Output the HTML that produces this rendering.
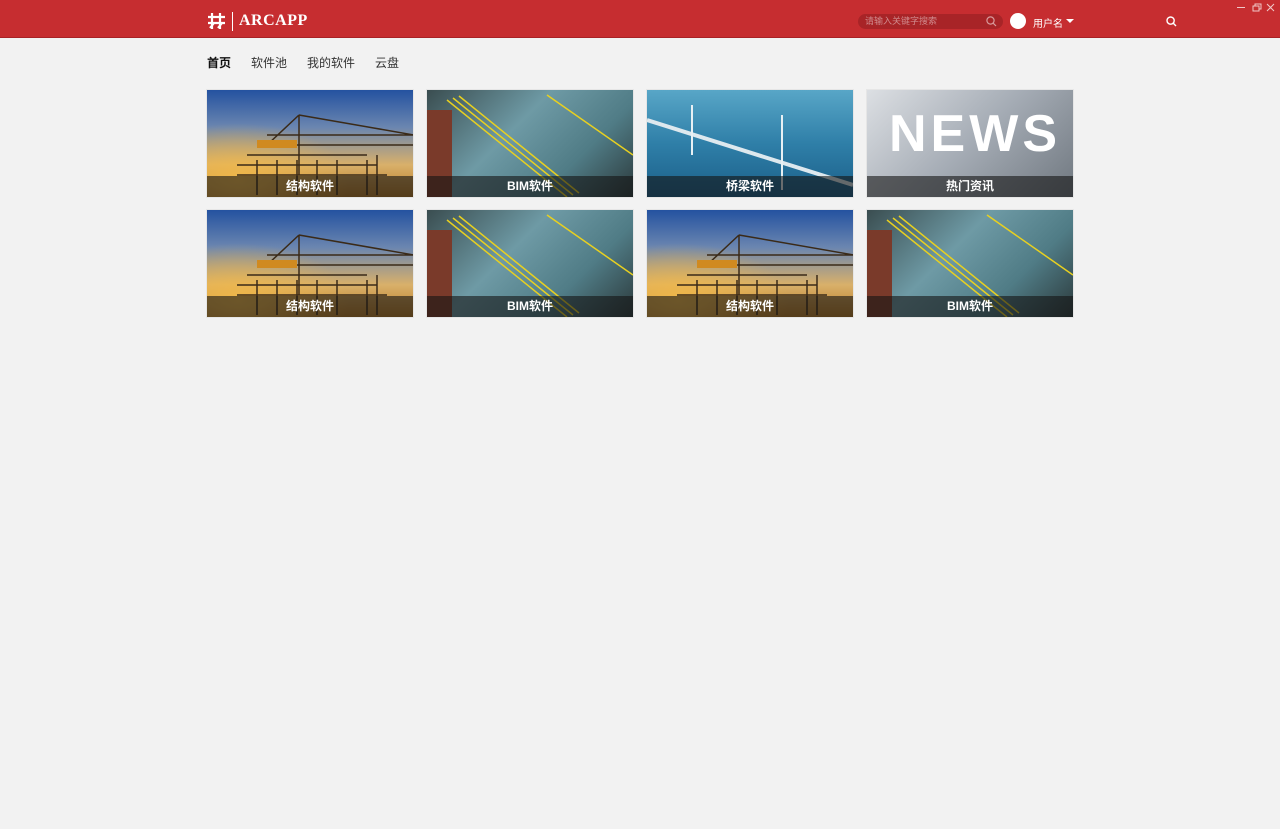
<!DOCTYPE html>
<html><head><meta charset="utf-8"><style>
*{margin:0;padding:0;box-sizing:border-box}
body{width:1280px;height:829px;background:#f2f2f2;font-family:"Liberation Sans","Noto Sans CJK SC",sans-serif;position:relative;overflow:hidden}
.hd{position:absolute;left:0;top:0;width:1280px;height:38px;background:#c62d30;border-bottom:1px solid #a82226}
.logo{position:absolute;left:207px;top:12px;color:#fff}
.sep{position:absolute;left:232px;top:12px;width:1px;height:19px;background:#fff}
.brand{position:absolute;left:239px;top:12px;color:#fff;font-family:"Liberation Serif",serif;font-weight:bold;font-size:16px;letter-spacing:0.5px}
.search{position:absolute;left:858px;top:14px;width:145px;height:15px;border-radius:8px;background:#a82427;color:#d08a8c;font-size:9px;line-height:15px;padding-left:7px}
.av{position:absolute;left:1010px;top:13px;width:16px;height:16px;border-radius:50%;background:#fff}
.user{position:absolute;left:1033px;top:15px;color:#fff;font-size:10px}
.caret{position:absolute;left:1066px;top:19px;border:4px solid transparent;border-top:4px solid #fff;border-bottom:0}
.nav{position:absolute;top:54px;font-size:12px;color:#333}
.card{position:absolute;width:206px;height:107px;overflow:hidden;box-shadow:0 0 0 1px #e6e6e6}
.cap{position:absolute;left:0;bottom:0;width:100%;height:21px;background:rgba(20,20,20,.6);color:#fff;font-weight:bold;font-size:12px;text-align:center;line-height:21px}
.crane{background:radial-gradient(ellipse at 15% 85%,#f0b84a 0%,rgba(240,184,74,0) 45%),linear-gradient(180deg,#2452a0 0%,#6b86b0 35%,#d9b06a 70%,#b77a25 100%)}
.bim{background:linear-gradient(135deg,#3a4d50 0%,#6e9aa5 40%,#507c86 70%,#2c3a3c 100%)}
.bridge{background:linear-gradient(180deg,#58a6c7 0%,#2f7fa8 50%,#1b5f89 100%)}
.news{background:linear-gradient(135deg,#dcdfe3 0%,#a5acb5 50%,#707880 100%)}
</style></head><body>
<div class="hd">
 <svg class="logo" width="19" height="18" viewBox="0 0 19 18" fill="none" stroke="#fff" stroke-width="2.2"><path d="M5 1v16M13 1v16M1 5h17M1 11h17M3 16l4-5M11 16l4-5"/></svg>
 <div class="sep"></div>
 <div class="brand">ARCAPP</div>
 <div class="search">请输入关键字搜索</div>
 <svg style="position:absolute;left:986px;top:16px" width="11" height="11" viewBox="0 0 11 11" fill="none" stroke="#d89a9b" stroke-width="1.2"><circle cx="4.5" cy="4.5" r="3.6"/><path d="M7.3 7.3L10 10"/></svg>
 <div class="av"></div>
 <div class="user">用户名</div>
 <div class="caret"></div>
 <svg style="position:absolute;left:1166px;top:16px" width="11" height="11" viewBox="0 0 11 11" fill="none" stroke="#fff" stroke-width="1.4"><circle cx="4.6" cy="4.6" r="3.6"/><path d="M7.3 7.3L10 10"/></svg>
 <svg style="position:absolute;left:1237px;top:3px" width="40" height="9" viewBox="0 0 40 9" fill="none" stroke="#f0c8c8" stroke-width="1"><path d="M0 4.5h8M16 3h6v5h-6zM18 3V1h6v5h-2M30 1l7 7M37 1l-7 7"/></svg>
</div>
<div class="nav" style="left:207px;font-weight:bold;color:#111">首页</div>
<div class="nav" style="left:251px">软件池</div>
<div class="nav" style="left:307px">我的软件</div>
<div class="nav" style="left:375px">云盘</div>

<div class="card crane" style="left:207px;top:90px"><svg width="206" height="107" style="position:absolute"><g stroke="#3a2a18" stroke-width="1.5" fill="none"><path d="M92 25v60M50 55h160M92 25L60 55M92 25l115 20M60 45h150"/><path d="M30 85h150M30 75h140M40 65h120M170 65v40M160 70v35M50 70v35M70 70v35M90 70v35M110 70v35M130 70v35"/></g><rect x="50" y="50" width="40" height="8" fill="#d08a20"/></svg><div class="cap">结构软件</div></div>
<div class="card bim" style="left:427px;top:90px"><svg width="206" height="107" style="position:absolute"><g stroke="#e8d020" stroke-width="1.5"><path d="M20 10l120 97M26 8l120 97M32 6l120 97M120 5l86 60"/></g><rect x="0" y="20" width="25" height="87" fill="#7a3a2a"/></svg><div class="cap">BIM软件</div></div>
<div class="card bridge" style="left:647px;top:90px"><svg width="206" height="107" style="position:absolute"><path d="M0 30L206 95" stroke="#dde8ee" stroke-width="4"/><g stroke="#e8f0f4" stroke-width="2"><path d="M45 15v50M135 25v75"/></g></svg><div class="cap">桥梁软件</div></div>
<div class="card news" style="left:867px;top:90px"><div style="position:absolute;left:22px;top:14px;font:900 52px 'Liberation Sans',sans-serif;color:#fff;letter-spacing:4px">NEWS</div><div class="cap">热门资讯</div></div>

<div class="card crane" style="left:207px;top:210px"><svg width="206" height="107" style="position:absolute"><g stroke="#3a2a18" stroke-width="1.5" fill="none"><path d="M92 25v60M50 55h160M92 25L60 55M92 25l115 20M60 45h150"/><path d="M30 85h150M30 75h140M40 65h120M170 65v40M160 70v35M50 70v35M70 70v35M90 70v35M110 70v35M130 70v35"/></g><rect x="50" y="50" width="40" height="8" fill="#d08a20"/></svg><div class="cap">结构软件</div></div>
<div class="card bim" style="left:427px;top:210px"><svg width="206" height="107" style="position:absolute"><g stroke="#e8d020" stroke-width="1.5"><path d="M20 10l120 97M26 8l120 97M32 6l120 97M120 5l86 60"/></g><rect x="0" y="20" width="25" height="87" fill="#7a3a2a"/></svg><div class="cap">BIM软件</div></div>
<div class="card crane" style="left:647px;top:210px"><svg width="206" height="107" style="position:absolute"><g stroke="#3a2a18" stroke-width="1.5" fill="none"><path d="M92 25v60M50 55h160M92 25L60 55M92 25l115 20M60 45h150"/><path d="M30 85h150M30 75h140M40 65h120M170 65v40M160 70v35M50 70v35M70 70v35M90 70v35M110 70v35M130 70v35"/></g><rect x="50" y="50" width="40" height="8" fill="#d08a20"/></svg><div class="cap">结构软件</div></div>
<div class="card bim" style="left:867px;top:210px"><svg width="206" height="107" style="position:absolute"><g stroke="#e8d020" stroke-width="1.5"><path d="M20 10l120 97M26 8l120 97M32 6l120 97M120 5l86 60"/></g><rect x="0" y="20" width="25" height="87" fill="#7a3a2a"/></svg><div class="cap">BIM软件</div></div>
</body></html>
